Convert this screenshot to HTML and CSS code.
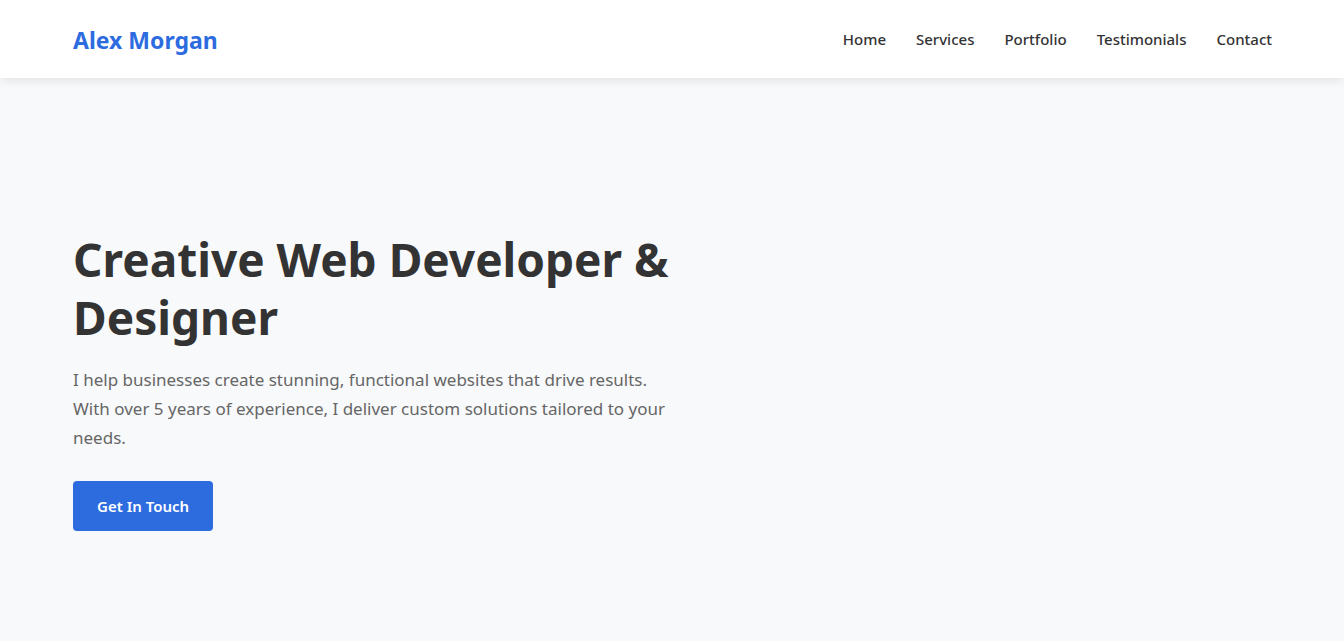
FILE: index.html
```html
<!DOCTYPE html>
<html lang="en">
<head>
<meta charset="utf-8">
<title>Alex Morgan</title>
<link rel="stylesheet" href="styles.css">
</head>
<body>
<header class="site-header">
  <div class="container header-inner">
    <a class="logo" href="#">Alex Morgan</a>
    <nav class="nav">
      <a href="#">Home</a>
      <a href="#">Services</a>
      <a href="#">Portfolio</a>
      <a href="#">Testimonials</a>
      <a href="#">Contact</a>
    </nav>
  </div>
</header>
<section class="hero">
  <div class="container">
    <div class="hero-content">
      <h1>Creative Web Developer &amp; Designer</h1>
      <p>I help businesses create stunning, functional websites that drive results. With over 5 years of experience, I deliver custom solutions tailored to your needs.</p>
      <a class="btn" href="#">Get In Touch</a>
    </div>
  </div>
</section>
</body>
</html>
```
FILE: styles.css
```css
* { box-sizing: border-box; }
html, body { margin: 0; padding: 0; }
body {
  font-family: "Noto Sans", "Open Sans", sans-serif;
  background: #f8f9fa;
  color: #333;
  line-height: 1.6;
}
a { text-decoration: none; }
.container {
  max-width: 1200px;
  margin: 0 auto;
}
.site-header {
  background: #fff;
  box-shadow: 0 2px 10px rgba(0,0,0,0.1);
  position: relative;
  z-index: 2;
}
.header-inner {
  height: 78px;
  display: flex;
  align-items: center;
  justify-content: space-between;
}
.logo {
  color: #2d6cdf;
  font-size: 23px;
  font-weight: 700;
  margin-top: 3px;
  margin-left: 1px;
}
.nav {
  display: flex;
  gap: 30px;
  margin-top: 0;
}
.nav a {
  color: #333;
  font-size: 15px;
  font-weight: 500;
}
.hero {
  padding: 153px 0 100px;
}
.hero-content {
  width: 600px;
  padding-left: 1px;
}
.hero h1 {
  font-size: 46px;
  line-height: 1.26;
  font-weight: 700;
  margin: 0 0 19px;
  color: #333;
}
.hero p {
  font-size: 17px;
  line-height: 1.7;
  color: #666;
  margin: 0 0 28px;
}
.btn {
  display: inline-block;
  background: #2d6cdf;
  color: #fff;
  font-size: 15px;
  font-weight: 600;
  padding: 13px 24px;
  border-radius: 4px;
}
```
